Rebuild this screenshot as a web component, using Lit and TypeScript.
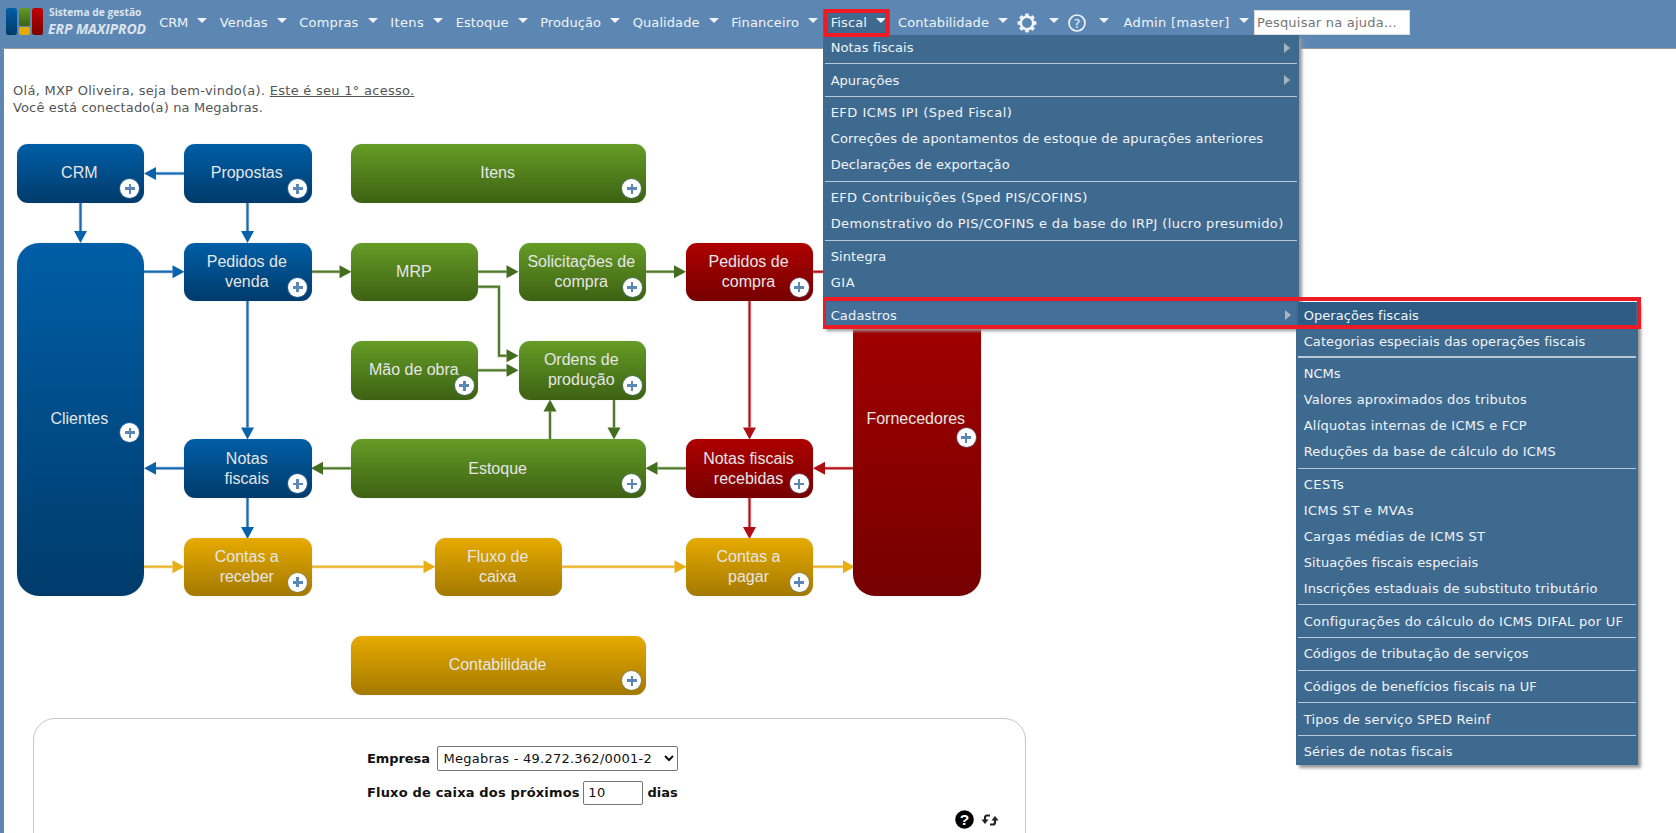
import { LitElement, html, css, svg } from "lit";
import { customElement } from "lit/decorators.js";

type Node = { x: number; y: number; w: number; h: number; c: string; t: string[]; r?: number; plus?: [number, number] | null };
const R1 = 144, R2 = 242.7, R3 = 341, R4 = 439.3, R5 = 537.7, R6 = 636, H = 58.7;
const ORIGIN_X = 4, ORIGIN_Y = 140;
const nodes: Node[] = [
  { x: 16.7, y: R1, w: 127.3, h: H, c: "blue", t: ["CRM"] },
  { x: 184, y: R1, w: 127.5, h: H, c: "blue", t: ["Propostas"] },
  { x: 351.2, y: R1, w: 294.8, h: H, c: "green", t: ["Itens"] },
  { x: 16.7, y: R2, w: 127.3, h: 353.6, c: "blue", t: ["Clientes"], r: 22, plus: [14, 180.5] },
  { x: 184, y: R2, w: 127.5, h: H, c: "blue", t: ["Pedidos de", "venda"] },
  { x: 351.2, y: R2, w: 127.3, h: H, c: "green", t: ["MRP"], plus: null },
  { x: 518.5, y: R2, w: 127.5, h: H, c: "green", t: ["Solicitações de", "compra"] },
  { x: 686, y: R2, w: 127, h: H, c: "red", t: ["Pedidos de", "compra"] },
  { x: 351.2, y: R3, w: 127.3, h: H, c: "green", t: ["Mão de obra"] },
  { x: 518.5, y: R3, w: 127.5, h: H, c: "green", t: ["Ordens de", "produção"] },
  { x: 853, y: R2, w: 127.5, h: 353.6, c: "red", t: ["Fornecedores"], r: 22, plus: [14.5, 185.5] },
  { x: 184, y: R4, w: 127.5, h: H, c: "blue", t: ["Notas", "fiscais"] },
  { x: 351.2, y: R4, w: 294.8, h: H, c: "green", t: ["Estoque"] },
  { x: 686, y: R4, w: 127, h: H, c: "red", t: ["Notas fiscais", "recebidas"] },
  { x: 184, y: R5, w: 127.5, h: H, c: "gold", t: ["Contas a", "receber"] },
  { x: 435, y: R5, w: 127.3, h: H, c: "gold", t: ["Fluxo de", "caixa"], plus: null },
  { x: 686, y: R5, w: 127, h: H, c: "gold", t: ["Contas a", "pagar"] },
  { x: 351.2, y: R6, w: 294.8, h: H, c: "gold", t: ["Contabilidade"] },
];

type Arrow = { p: number[][]; c: string; h: string; noHead?: boolean };
const BL = "#1668b0", BLH = "#0a62ab", GR = "#4f7a2a", GRH = "#436d1f", RD = "#b4161c", RDH = "#ad0f14", GO = "#eab52c", GOH = "#e8ae14";
const Y1 = 173.5, Y2 = 271.7, Y4 = 468.3, Y5 = 566.7;
const arrows: Arrow[] = [
  { p: [[184, Y1], [144, Y1]], c: BL, h: BLH },
  { p: [[80.5, 203], [80.5, 243]], c: BL, h: BLH },
  { p: [[247.5, 203], [247.5, 243]], c: BL, h: BLH },
  { p: [[144, Y2], [184.5, Y2]], c: BL, h: BLH },
  { p: [[247.5, 301], [247.5, 439.5]], c: BL, h: BLH },
  { p: [[184, Y4], [144, Y4]], c: BL, h: BLH },
  { p: [[247.5, 498], [247.5, 539]], c: BL, h: BLH },
  { p: [[311, Y2], [351.5, Y2]], c: GR, h: GRH },
  { p: [[478, Y2], [518.5, Y2]], c: GR, h: GRH },
  { p: [[478, 286.7], [499, 286.7], [499, 355.7], [518.5, 355.7]], c: GR, h: GRH },
  { p: [[478, 370.3], [518.5, 370.3]], c: GR, h: GRH },
  { p: [[646, Y2], [686, Y2]], c: GR, h: GRH },
  { p: [[550, 439.5], [550, 399.5]], c: GR, h: GRH },
  { p: [[614, 399.5], [614, 439.5]], c: GR, h: GRH },
  { p: [[351.5, Y4], [311, Y4]], c: GR, h: GRH },
  { p: [[686, Y4], [645.5, Y4]], c: GR, h: GRH },
  { p: [[813, Y2], [853, Y2]], c: RD, h: RDH, noHead: true },
  { p: [[749.5, 301], [749.5, 439.5]], c: RD, h: RDH },
  { p: [[853, Y4], [813, Y4]], c: RD, h: RDH },
  { p: [[749.5, 498], [749.5, 539]], c: RD, h: RDH },
  { p: [[144, Y5], [184.5, Y5]], c: GO, h: GOH },
  { p: [[311, Y5], [435.5, Y5]], c: GO, h: GOH },
  { p: [[562, Y5], [686.5, Y5]], c: GO, h: GOH },
  { p: [[813, Y5], [855, Y5]], c: GO, h: GOH },
];

const nav = ["CRM", "Vendas", "Compras", "Itens", "Estoque", "Produção", "Qualidade", "Financeiro"];

/* Widths of each label in the reference; the fallback font is slightly narrower, so spacing is derived from these. */
const W: Record<string, number> = {
  CRM: 29, Vendas: 47.9, Compras: 59.3, Itens: 33.9, Estoque: 52.9, "Produção": 61, Qualidade: 66.8, Financeiro: 67.9,
  Fiscal: 36.4, Contabilidade: 91, "Admin [master]": 106,
  "Notas fiscais": 82.9, "Apurações": 68.6, "EFD ICMS IPI (Sped Fiscal)": 181.8,
  "Correções de apontamentos de estoque de apurações anteriores": 432.6, "Declarações de exportação": 179,
  "EFD Contribuições (Sped PIS/COFINS)": 257, "Demonstrativo do PIS/COFINS e da base do IRPJ (lucro presumido)": 453,
  Sintegra: 55.7, GIA: 24.7, Cadastros: 66.3,
  "Operações fiscais": 115.3, "Categorias especiais das operações fiscais": 281.7, NCMs: 37,
  "Valores aproximados dos tributos": 223.3, "Alíquotas internas de ICMS e FCP": 223.3,
  "Reduções da base de cálculo do ICMS": 252.3, CESTs: 40.7, "ICMS ST e MVAs": 110.3,
  "Cargas médias de ICMS ST": 181.7, "Situações fiscais especiais": 174.7,
  "Inscrições estaduais de substituto tributário": 294, "Configurações do cálculo do ICMS DIFAL por UF": 319.7,
  "Códigos de tributação de serviços": 225, "Códigos de benefícios fiscais na UF": 233.3,
  "Tipos de serviço SPED Reinf": 187, "Séries de notas fiscais": 149,
  Empresa: 62.9, "Fluxo de caixa dos próximos": 212.7, dias: 30,
};

type Row = { t?: string; sep?: boolean; sub?: boolean; cls?: string };
const fiscal: Row[] = [
  { t: "Notas fiscais", sub: true }, { sep: true },
  { t: "Apurações", sub: true }, { sep: true },
  { t: "EFD ICMS IPI (Sped Fiscal)" },
  { t: "Correções de apontamentos de estoque de apurações anteriores" },
  { t: "Declarações de exportação" }, { sep: true },
  { t: "EFD Contribuições (Sped PIS/COFINS)" },
  { t: "Demonstrativo do PIS/COFINS e da base do IRPJ (lucro presumido)" }, { sep: true },
  { t: "Sintegra" }, { t: "GIA" }, { sep: true },
];
const cadastros: Row[] = [
  { t: "Operações fiscais", cls: "hot" },
  { t: "Categorias especiais das operações fiscais" }, { sep: true, cls: "thick" },
  { t: "NCMs" }, { t: "Valores aproximados dos tributos" }, { t: "Alíquotas internas de ICMS e FCP" },
  { t: "Reduções da base de cálculo do ICMS" }, { sep: true },
  { t: "CESTs" }, { t: "ICMS ST e MVAs" }, { t: "Cargas médias de ICMS ST" }, { t: "Situações fiscais especiais" },
  { t: "Inscrições estaduais de substituto tributário" }, { sep: true },
  { t: "Configurações do cálculo do ICMS DIFAL por UF" }, { sep: true },
  { t: "Códigos de tributação de serviços" }, { sep: true },
  { t: "Códigos de benefícios fiscais na UF" }, { sep: true },
  { t: "Tipos de serviço SPED Reinf" }, { sep: true },
  { t: "Séries de notas fiscais" },
];

function head(a: number[], b: number[]) {
  const dx = Math.sign(b[0] - a[0]), dy = Math.sign(b[1] - a[1]);
  const L = 12, W2 = 6.5;
  const bx = b[0] - dx * L, by = b[1] - dy * L;
  return { base: [bx, by], pts: `${b[0]},${b[1]} ${bx - dy * W2},${by - dx * W2} ${bx + dy * W2},${by + dx * W2}` };
}

const fit = (t: string) => html`<span class="fit" data-w=${W[t]}>${t}</span>`;

@customElement("app-root")
export class AppRoot extends LitElement {
  static styles = css`
    :host { display: block; height: 833px; overflow: hidden; background: #fff; font-family: "DejaVu Sans", Verdana, sans-serif; font-size: 13px; color: #555; }
    .fit { white-space: nowrap; display: inline-block; }
    .top { height: 48px; background: #5d87b3; display: flex; align-items: flex-start; position: relative; z-index: 5; }
    .logo { width: 151.2px; flex: none; height: 48px; display: flex; padding: 8px 0 0 6px; box-sizing: border-box; gap: 6px; }
    .bars { display: flex; gap: 2px; height: 27px; }
    .bar { width: 11px; border-radius: 2.5px; }
    .b1 { background: linear-gradient(#005ea6, #003a68); }
    .b3 { background: linear-gradient(#c00000, #7a0000); }
    .b2 { display: flex; flex-direction: column; gap: 1px; width: 11px; }
    .b2 i { display: block; border-radius: 2px; }
    .b2 .g { height: 18px; background: linear-gradient(#659c26, #3d6113); }
    .b2 .y { height: 8px; background: #e6aa00; }
    .ltext { font-family: "Open Sans", sans-serif; color: #dbe4ee; display: flex; flex-direction: column; margin-top: -3px; white-space: nowrap; }
    .l1 { font-size: 10.25px; font-weight: 700; line-height: 15px; }
    .l2 { font-size: 14px; font-weight: 700; font-style: italic; line-height: 18px; letter-spacing: -0.1px; margin-left: -1px; }
    .nav { display: flex; margin-top: 9px; align-items: flex-start; }
    .item { position: relative; height: 25px; display: flex; align-items: center; padding: 2px 4px 0 8px; box-sizing: border-box; color: #f0f4f8; white-space: nowrap; margin-right: 0.6px; }
    .item.on { background: #3f6a90; margin-right: 0; }
    .item.gear { padding-left: 4px; }
    .item.ask { padding-left: 3.4px; }
    .item.adm { margin-left: 2.4px; }
    .caret { width: 0; height: 0; border-left: 5px solid transparent; border-right: 5px solid transparent; border-top: 5px solid #f0f4f8; margin-left: 9px; margin-top: -5px; }
    .gear .caret { margin-left: 12px; }
    .ask .caret { margin-left: 12px; }
    .item svg.i { display: block; margin-top: 1px; }
    .flagA { position: absolute; left: 1.6px; right: 1px; top: 0; height: 27.7px; border: 4px solid #ed1c24; box-sizing: border-box; z-index: 3; }
    .search { width: 156px; height: 25px; margin-left: 0.9px; box-sizing: border-box; border: 1px solid #ddd; background: #fff; padding: 0 2px; font: 13px "DejaVu Sans", Verdana, sans-serif; letter-spacing: 0.22px; outline: none; margin-top: 1px; }
    .search::placeholder { color: #757575; opacity: 1; }
    .menu { position: absolute; background: #3f6a90; box-shadow: 3px 3px 3px #999; color: #f0f4f8; box-sizing: border-box; padding: 0 1px; }
    .m1 { left: 0; top: 25.6px; width: 476px; }
    .m2 { left: 473px; top: 0; width: 342.3px; padding: 0 2px; }
    .row { height: 26.05px; display: flex; align-items: center; padding-left: 7px; box-sizing: border-box; position: relative; white-space: nowrap; }
    .m2 .row { padding-left: 6px; }
    .row.hot { background: #2f5c84; }
    .row.cad { background: #436f98; margin: 0 -1px; padding-left: 8px; }
    .sep { height: 1px; background: #b9c8d6; margin: 2.8px 1px; }
    .m2 .sep { margin: 2.8px 0; }
    .sep.thick { height: 2px; margin: 2.3px 0; }
    .tri { position: absolute; right: 8px; top: 8px; width: 0; height: 0; border-top: 5px solid transparent; border-bottom: 5px solid transparent; border-left: 6px solid #a9b4bf; }
    .flagB { position: absolute; left: 0; top: -4.6px; width: 818px; height: 32px; border: 4px solid #ed1c24; border-left-width: 3px; box-sizing: border-box; z-index: 3; }
    .main { border-left: 4px solid #5d87b3; border-top: 1px solid #999; height: 785px; box-sizing: border-box; }
    .intro { padding: 34px 0 0 9px; line-height: 16.6px; height: 91px; box-sizing: border-box; }
    .intro u { text-decoration: underline; }
    .dia { position: relative; height: 578px; }
    .arrows { position: absolute; left: 0; top: 0; }
    .node { position: absolute; box-sizing: border-box; padding-right: 2px; display: flex; flex-direction: column; align-items: center; justify-content: center; font-family: "Liberation Sans", Arial, sans-serif; font-size: 16px; line-height: 20px; color: #e6e6e6; box-shadow: 0 0 1px #aaa; text-align: center; }
    .blue { background: linear-gradient(#005ea6, #003b6b); }
    .green { background: linear-gradient(#659c26, #3d6113); }
    .red { background: linear-gradient(#ae0000, #760000); }
    .gold { background: linear-gradient(#e6aa00, #a47900); }
    .plus { position: absolute; width: 19px; height: 19px; border-radius: 50%; background: #fff; box-shadow: 0 0 0 1px rgba(90, 130, 180, 0.45); }
    .plus::before { content: ""; position: absolute; left: 4.5px; top: 8.25px; width: 10px; height: 2.5px; background: #5a87b8; }
    .plus::after { content: ""; position: absolute; left: 8.25px; top: 4.5px; width: 2.5px; height: 10px; background: #5a87b8; }
    .panel { margin-left: 28.5px; width: 993px; height: 240px; border: 1px solid #c8c8c8; border-radius: 22px; box-sizing: border-box; padding: 27px 26px 0 333.5px; color: #111; font-weight: 700; }
    .frow { display: flex; align-items: center; height: 25px; margin-bottom: 9px; white-space: nowrap; }
    .frow select { margin-left: 7.6px; width: 240.2px; height: 25px; font: 13px "DejaVu Sans", Verdana, sans-serif; letter-spacing: 0.25px; background: #fff; color: #111; border: 1px solid #767676; border-radius: 2px; padding: 0 1px; }
    .frow input { margin: 0 5px 0 3.6px; width: 59.3px; height: 24px; box-sizing: border-box; font: 13px "DejaVu Sans", Verdana, sans-serif; letter-spacing: 0.5px; color: #111; border: 1px solid #767676; border-radius: 2px; padding: 0 4px; }
    .tools { display: flex; justify-content: flex-end; gap: 6.5px; align-items: center; margin-top: -4px; }
  `;

  updated() {
    this.renderRoot.querySelectorAll<HTMLElement>("[data-w]").forEach((el) => {
      el.style.letterSpacing = "0";
      const natural = el.getBoundingClientRect().width;
      const n = (el.textContent ?? "").trim().length;
      el.style.letterSpacing = `${(Number(el.dataset.w) - natural) / n}px`;
    });
  }

  private rows(list: Row[]) {
    return list.map((r) =>
      r.sep
        ? html`<div class="sep ${r.cls ?? ""}"></div>`
        : html`<div class="row ${r.cls ?? ""}">${fit(r.t!)}${r.sub ? html`<span class="tri"></span>` : null}</div>`
    );
  }

  private gear() {
    const teeth = [0, 45, 90, 135, 180, 225, 270, 315];
    return html`<svg class="i" width="20" height="20" viewBox="0 0 20 20" fill="none" stroke="#f0f4f8">
      <circle cx="10" cy="10" r="6.25" stroke-width="2.6"></circle>
      ${teeth.map((a) => svg`<line x1="10" y1="3" x2="10" y2="0.6" stroke-width="3.6" transform="rotate(${a} 10 10)"></line>`)}
    </svg>`;
  }

  private help() {
    return html`<svg class="i" width="20" height="20" viewBox="0 0 20 20"><circle cx="10" cy="10" r="8" fill="none" stroke="#f0f4f8" stroke-width="1.7"/><text x="10" y="14.5" text-anchor="middle" font-family="DejaVu Sans, sans-serif" font-size="12.5" fill="#f0f4f8">?</text></svg>`;
  }

  render() {
    return html`
      <div class="top">
        <div class="logo">
          <div class="bars">
            <div class="bar b1"></div>
            <div class="b2"><i class="g"></i><i class="y"></i></div>
            <div class="bar b3"></div>
          </div>
          <div class="ltext"><span class="l1">Sistema de gestão</span><span class="l2">ERP MAXIPROD</span></div>
        </div>
        <div class="nav">
          ${nav.map((n) => html`<div class="item">${fit(n)}<span class="caret"></span></div>`)}
          <div class="item on">
            ${fit("Fiscal")}<span class="caret"></span>
            <div class="flagA"></div>
            <div class="menu m1">
              ${this.rows(fiscal)}
              <div class="row cad">
                ${fit("Cadastros")}<span class="tri"></span>
                <div class="flagB"></div>
                <div class="menu m2">${this.rows(cadastros)}</div>
              </div>
            </div>
          </div>
          <div class="item">${fit("Contabilidade")}<span class="caret"></span></div>
          <div class="item gear">${this.gear()}<span class="caret"></span></div>
          <div class="item ask">${this.help()}<span class="caret"></span></div>
          <div class="item adm">${fit("Admin [master]")}<span class="caret"></span></div>
          <input class="search" placeholder="Pesquisar na ajuda..." />
        </div>
      </div>
      <div class="main">
        <div class="intro">
          <span class="fit" data-w="401.4">Olá, MXP Oliveira, seja bem-vindo(a). <u>Este é seu 1° acesso.</u></span><br />
          <span class="fit" data-w="250">Você está conectado(a) na Megabras.</span>
        </div>
        <div class="dia">
          <svg class="arrows" width="1100" height="578" viewBox="${ORIGIN_X} ${ORIGIN_Y} 1100 578">
            ${arrows.map((a) => {
              const n = a.p.length;
              const h = head(a.p[n - 2], a.p[n - 1]);
              const pts = a.noHead ? a.p : [...a.p.slice(0, -1), h.base];
              const s = pts.map((q) => q.join(",")).join(" ");
              return svg`<polyline points="${s}" fill="none" stroke="${a.c}" stroke-opacity=".35" stroke-width="3.4"/><polyline points="${s}" fill="none" stroke="${a.c}" stroke-width="2"/>${a.noHead ? null : svg`<polygon points="${h.pts}" fill="${a.h}"/>`}`;
            })}
          </svg>
          ${nodes.map(
            (n) => html`<div
              class="node ${n.c}"
              style="left:${n.x - ORIGIN_X}px;top:${n.y - ORIGIN_Y}px;width:${n.w}px;height:${n.h}px;border-radius:${n.r ?? 11}px"
            >
              ${n.t.map((l) => html`<span>${l}</span>`)}
              ${n.plus === null
                ? null
                : html`<span
                    class="plus"
                    style="${n.plus ? `left:${n.w - n.plus[0] - 9.5}px;top:${n.plus[1]}px` : "right:4.5px;bottom:4.5px"}"
                  ></span>`}
            </div>`
          )}
        </div>
        <div class="panel">
          <div class="frow">${fit("Empresa")}<select><option>Megabras - 49.272.362/0001-2</option></select></div>
          <div class="frow">${fit("Fluxo de caixa dos próximos")}<input value="10" />${fit("dias")}</div>
          <div class="tools">
            <svg width="19" height="19" viewBox="0 0 19 19"><circle cx="9.5" cy="9.5" r="9.3" fill="#000"/><text x="9.5" y="15" text-anchor="middle" font-family="Liberation Sans, sans-serif" font-size="15.5" font-weight="700" fill="#fff">?</text></svg>
            <svg width="18" height="12" viewBox="0 0 18 12" fill="none" stroke="#222" stroke-width="2.2"><path d="M9 1.5H6a2 2 0 0 0-2 2V6"/><path d="M9 10.5h3a2 2 0 0 0 2-2V6"/><path d="M.4 5.5h7.2L4 10z" fill="#222" stroke="none"/><path d="M10.4 6.5h7.2L14 2z" fill="#222" stroke="none"/></svg>
          </div>
        </div>
      </div>
    `;
  }
}
